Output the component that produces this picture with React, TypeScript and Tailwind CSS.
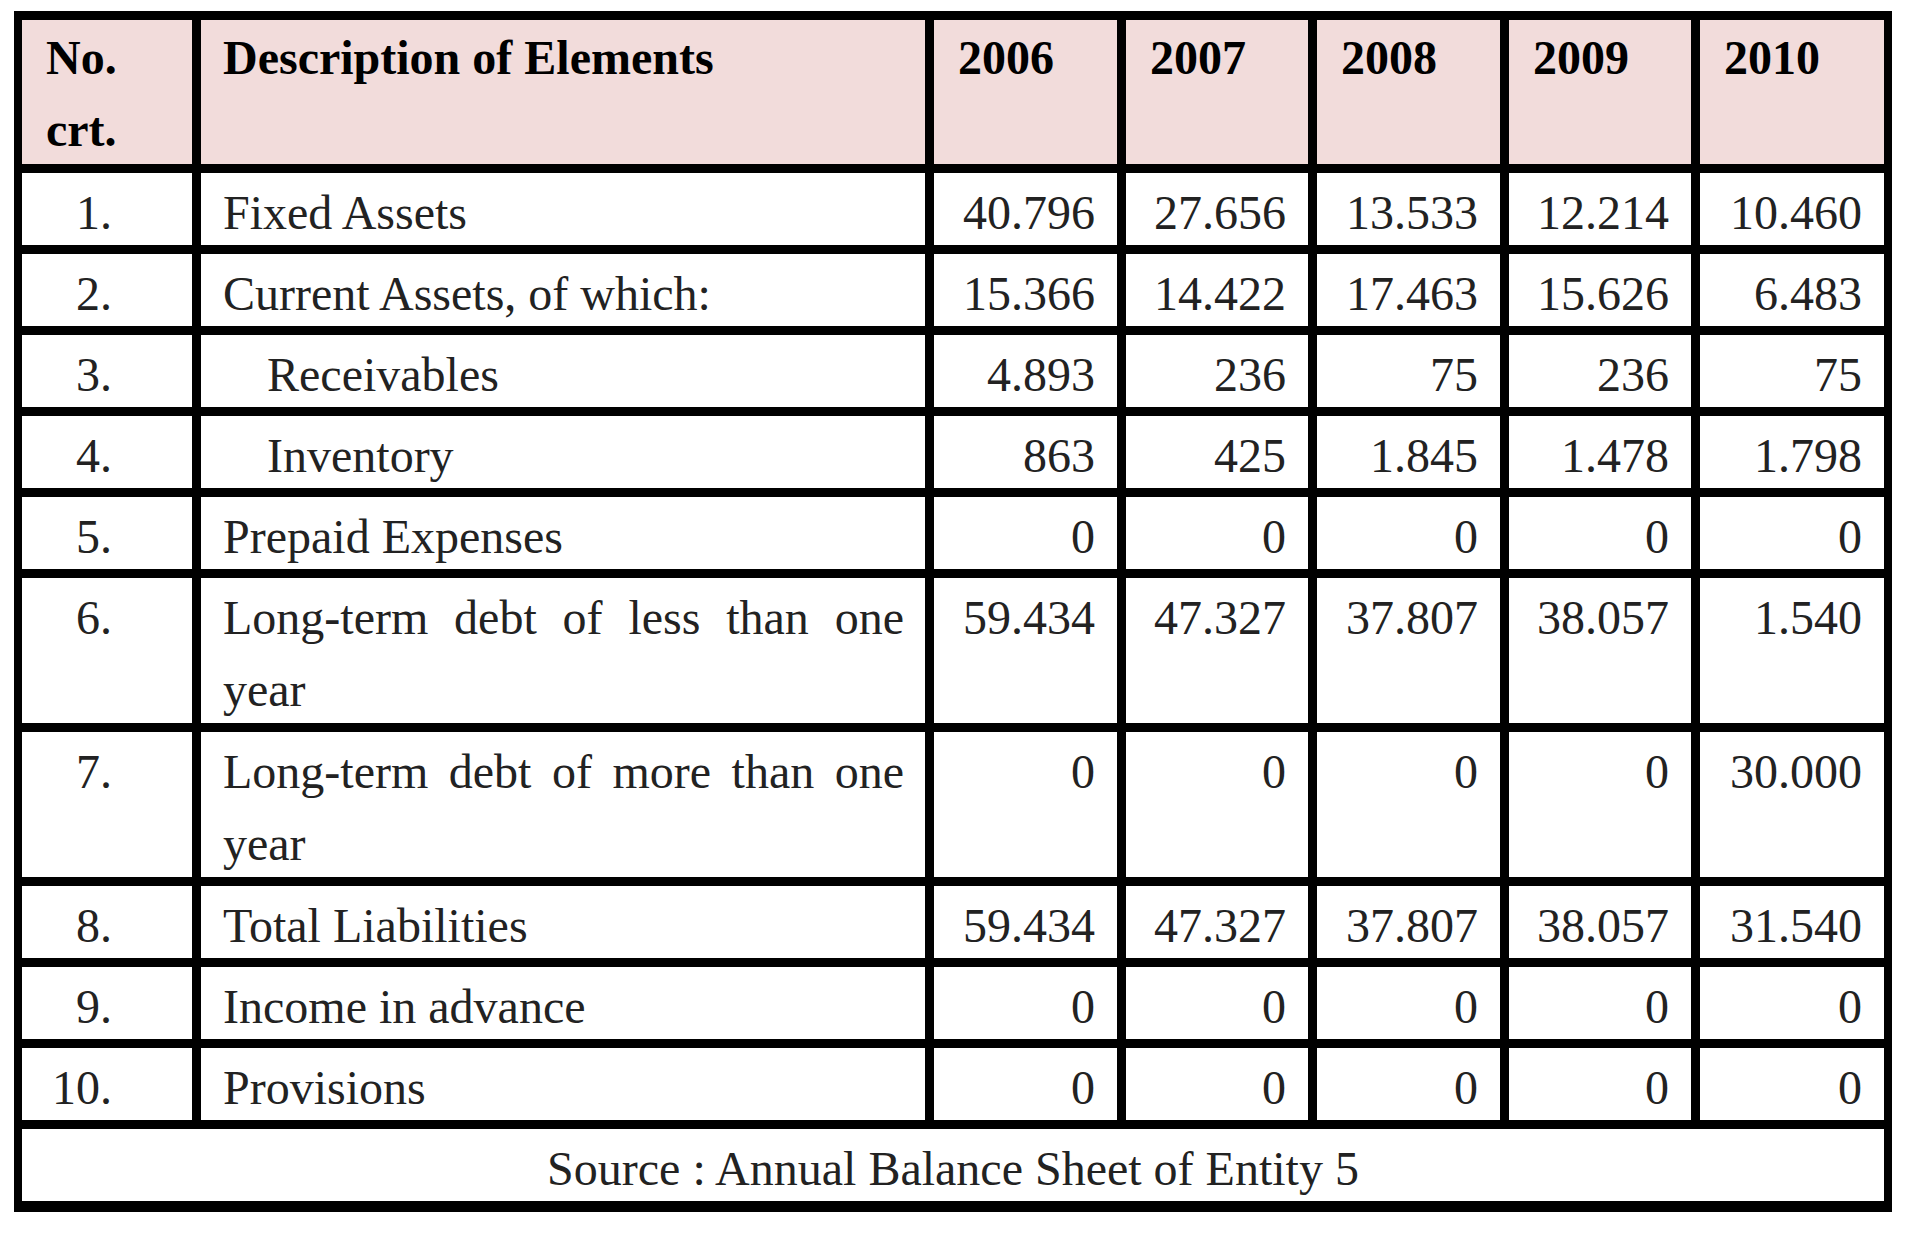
import React from "react";

const years = ["2006", "2007", "2008", "2009", "2010"];

const rows = [
    { no: "1.", label: "Fixed Assets", values: ["40.796", "27.656", "13.533", "12.214", "10.460"] },
    { no: "2.", label: "Current Assets, of which:", values: ["15.366", "14.422", "17.463", "15.626", "6.483"] },
    { no: "3.", label: "Receivables", values: ["4.893", "236", "75", "236", "75"], indent: true },
    { no: "4.", label: "Inventory", values: ["863", "425", "1.845", "1.478", "1.798"], indent: true },
    { no: "5.", label: "Prepaid Expenses", values: ["0", "0", "0", "0", "0"] },
    { no: "6.", label: "Long-term debt of less than one year", values: ["59.434", "47.327", "37.807", "38.057", "1.540"] },
    { no: "7.", label: "Long-term debt of more than one year", values: ["0", "0", "0", "0", "30.000"] },
    { no: "8.", label: "Total Liabilities", values: ["59.434", "47.327", "37.807", "38.057", "31.540"] },
    { no: "9.", label: "Income in advance", values: ["0", "0", "0", "0", "0"] },
    { no: "10.", label: "Provisions", values: ["0", "0", "0", "0", "0"] },
];

export default function App() {
    return (
        <div className="min-h-screen bg-white pl-[14px] pt-[11px] font-['Liberation_Serif',serif] text-[48px] leading-[72px]">
            <div className="inline-grid grid-cols-[170px_724px_183px_182px_183px_182px_184px] grid-rows-[144px_72px_72px_72px_72px_72px_145px_145px_72px_72px_72px_72px] gap-[9px] bg-black pt-[9px] pb-[11px] px-[8px]">
                {/* Header */}
                <div className="bg-[#f2dcdb] pl-[24px] pt-[2px] font-bold text-black">
                    No.
                    <br />
                    crt.
                </div>
                <div className="bg-[#f2dcdb] pl-[22px] pt-[2px] font-bold text-black">Description of Elements</div>
                {years.map((y) => (
                    <div key={y} className="bg-[#f2dcdb] pl-[24px] pt-[2px] font-bold text-black">
                        {y}
                    </div>
                ))}

                {/* Body rows */}
                {rows.map((row) => (
                    <React.Fragment key={row.no}>
                        <div className="bg-white pr-[80px] pt-[4px] text-right text-[#222]">{row.no}</div>
                        <div className={`bg-white pr-[21px] pt-[4px] text-justify text-[#222] ${row.indent ? "pl-[66px]" : "pl-[22px]"}`}>
                            {row.label}
                        </div>
                        {row.values.map((v, i) => (
                            <div key={i} className="bg-white pr-[22px] pt-[4px] text-right text-[#222]">
                                {v}
                            </div>
                        ))}
                    </React.Fragment>
                ))}

                {/* Source */}
                <div className="col-span-7 bg-white pt-[4px] text-center text-[#222]">
                    Source : Annual Balance Sheet of Entity 5
                </div>
            </div>
        </div>
    );
}
